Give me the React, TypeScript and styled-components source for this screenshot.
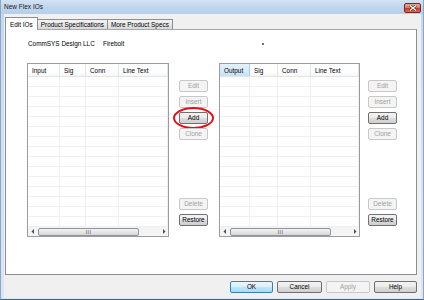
import React from "react";
import styled, { createGlobalStyle, css } from "styled-components";

const GlobalStyle = createGlobalStyle`
  html, body { margin: 0; padding: 0; background: #ffffff; }
  body { font-family: "Liberation Sans", Arial, sans-serif; }
  * { box-sizing: border-box; }
`;

const FONT = `"Liberation Sans", Arial, sans-serif`;

const Window = styled.div`
  width: 424px;
  height: 300px;
  display: flex;
  flex-direction: column;
  background: linear-gradient(180deg, #c2d7ee 0%, #cfe0f3 40%, #d8e6f5 100%);
  border-left: 1px solid #8da6c4;
  border-right: 1px solid #8da6c4;
  border-bottom: 1px solid #3e6190;
  font-family: ${FONT};
  font-size: 6.4px;
  color: #000;
`;

const TitleBar = styled.div`
  height: 14px;
  flex: none;
  display: flex;
  align-items: center;
  justify-content: space-between;
  padding: 0 2px 0 3px;
  background: linear-gradient(180deg, #d4e3f4 0%, #bfd5ee 50%, #b6cfea 100%);
`;

const Title = styled.span`
  font-size: 6.5px;
  color: #1a1a1a;
  line-height: 8px;
`;

const CloseButton = styled.div`
  width: 17px;
  height: 10px;
  margin-top: 1px;
  border: 1px solid #7a2a22;
  border-radius: 2px;
  background: linear-gradient(180deg, #e8a598 0%, #d77b6c 45%, #c2402e 55%, #d66a55 100%);
  display: flex;
  align-items: center;
  justify-content: center;
`;

const Client = styled.div`
  flex: 1;
  display: flex;
  flex-direction: column;
  margin: 0 2px 1px 3px;
  background: #f0f0f0;
  padding-top: 3px;
`;

const Tabs = styled.div`
  display: flex;
  align-items: flex-end;
  height: 12px;
  padding-left: 2px;
  position: relative;
  z-index: 1;
`;

const Tab = styled.div<{ $active?: boolean }>`
  height: 10px;
  padding: 0 3px;
  display: flex;
  align-items: center;
  border: 1px solid #8c8e94;
  border-bottom: none;
  margin-left: -1px;
  background: linear-gradient(180deg, #f3f3f3 0%, #e8e8e8 50%, #d8d8d8 100%);
  white-space: nowrap;
  ${(p) =>
    p.$active &&
    css`
      height: 13px;
      margin-bottom: -1px;
      padding: 0 4px;
      background: #ffffff;
      z-index: 2;
    `}
`;

const Panel = styled.div`
  height: 246px;
  flex: none;
  margin: 0 4px 0 1px;
  background: #ffffff;
  border: 1px solid #8c8e94;
  border-top-color: #a5a7ab;
  display: flex;
  flex-direction: column;
`;

const InfoRow = styled.div`
  margin-top: 10px;
  padding-left: 22px;
  height: 8px;
  display: grid;
  grid-template-columns: 75px 159px auto;
  align-items: center;
  line-height: 8px;
`;

const Mark = styled.span`
  width: 2px;
  height: 2px;
  background: #707070;
`;

const ListsRow = styled.div`
  margin-top: 15px;
  padding-left: 21px;
  display: flex;
  align-items: stretch;
  height: 174px;
`;

const ListBox = styled.div<{ $w: number; $gap: number }>`
  width: ${(p) => p.$w}px;
  margin-right: ${(p) => p.$gap}px;
  border: 1px solid #9a9ca0;
  background: #fff;
  display: flex;
  flex-direction: column;
  overflow: hidden;
`;

const HeaderRow = styled.div<{ $cols: string }>`
  display: grid;
  grid-template-columns: ${(p) => p.$cols};
  height: 13px;
  flex: none;
  background: linear-gradient(180deg, #ffffff 0%, #ffffff 60%, #f5f6f7 100%);
  border-bottom: 1px solid #e3e4e6;
`;

const HeaderCell = styled.div<{ $hot?: boolean }>`
  display: flex;
  align-items: center;
  padding-left: 4px;
  border-right: 1px solid #e3e4e6;
  ${(p) =>
    p.$hot &&
    css`
      background: linear-gradient(180deg, #e3f1fb 0%, #d5eaf9 60%, #c4e1f6 100%);
      border-right-color: #a9d2ef;
    `}
`;

const Rows = styled.div`
  flex: 1;
  overflow: hidden;
`;

const Row = styled.div<{ $cols: string }>`
  display: grid;
  grid-template-columns: ${(p) => p.$cols};
  height: 10px;
`;

const Cell = styled.div`
  border-right: 1px solid #f0f0f0;
  border-bottom: 1px solid #f0f0f0;
`;

const HScroll = styled.div`
  height: 10px;
  flex: none;
  display: flex;
  align-items: center;
  background: #f4f4f4;
  border-top: 1px solid #f0f0f0;
`;

const Arrow = styled.div`
  width: 9px;
  height: 9px;
  flex: none;
  display: flex;
  align-items: center;
  justify-content: center;
`;

const Track = styled.div`
  flex: 1;
  height: 8px;
  display: flex;
  align-items: center;
  padding-left: 1px;
`;

const Thumb = styled.div`
  width: 101px;
  height: 8px;
  border: 1px solid #8f9499;
  border-radius: 2px;
  background: linear-gradient(180deg, #f2f2f2 0%, #e6e6e6 50%, #d6d6d6 100%);
  display: flex;
  align-items: center;
  justify-content: center;
  font-size: 5px;
  letter-spacing: 0.5px;
  color: #404040;
  line-height: 6px;
`;

const ButtonCol = styled.div<{ $gap: number }>`
  width: 29px;
  margin-right: ${(p) => p.$gap}px;
  display: flex;
  flex-direction: column;
  gap: 4px;
  padding-top: 17px;
  padding-bottom: 11px;
`;

const Btn = styled.div<{ $disabled?: boolean; $w?: number; $default?: boolean }>`
  height: 12px;
  width: ${(p) => (p.$w ? `${p.$w}px` : "100%")};
  flex: none;
  display: flex;
  align-items: center;
  justify-content: center;
  border: 1px solid #707070;
  border-radius: 2px;
  background: linear-gradient(180deg, #f3f3f3 0%, #ebebeb 48%, #dddddd 52%, #cfcfcf 100%);
  color: #000;
  position: relative;
  line-height: 8px;
  ${(p) =>
    p.$disabled &&
    css`
      border-color: #c8c8c8;
      background: #f4f4f4;
      color: #a0a0a0;
    `}
  ${(p) =>
    p.$default &&
    css`
      border-color: #3c7fb1;
      background: linear-gradient(180deg, #eaf6fd 0%, #d9f0fc 48%, #bee6fd 52%, #a7d9f5 100%);
    `}
`;

const Spacer = styled.div`
  flex: 1;
`;

const Highlight = styled.div`
  position: absolute;
  left: -7px;
  top: -6px;
  width: 41px;
  height: 22px;
  border: 2px solid #e3101a;
  border-radius: 50%;
  pointer-events: none;
`;

const Footer = styled.div`
  display: flex;
  justify-content: flex-end;
  gap: 4px;
  padding: 6px 4px 0 0;
`;

const leftCols = "32px 26px 33px 1fr";
const rightCols = "30px 28px 33px 1fr";

const ArrowIcon = ({ dir }: { dir: "l" | "r" }) => (
  <svg width="4" height="5" viewBox="0 0 4 5">
    {dir === "l" ? <path d="M3 0 L0.5 2.5 L3 5 Z" fill="#505050" /> : <path d="M1 0 L3.5 2.5 L1 5 Z" fill="#505050" />}
  </svg>
);

const List = ({ cols, headers, w, gap, hot }: { cols: string; headers: string[]; w: number; gap: number; hot?: number }) => (
  <ListBox $w={w} $gap={gap}>
    <HeaderRow $cols={cols}>
      {headers.map((h, i) => (
        <HeaderCell key={h} $hot={hot === i}>
          {h}
        </HeaderCell>
      ))}
    </HeaderRow>
    <Rows>
      {Array.from({ length: 16 }).map((_, r) => (
        <Row key={r} $cols={cols}>
          {headers.map((h) => (
            <Cell key={h} />
          ))}
        </Row>
      ))}
    </Rows>
    <HScroll>
      <Arrow>
        <ArrowIcon dir="l" />
      </Arrow>
      <Track>
        <Thumb>III</Thumb>
      </Track>
      <Arrow>
        <ArrowIcon dir="r" />
      </Arrow>
    </HScroll>
  </ListBox>
);

const Buttons = ({ gap, mark }: { gap: number; mark?: boolean }) => (
  <ButtonCol $gap={gap}>
    <Btn $disabled>Edit</Btn>
    <Btn $disabled>Insert</Btn>
    <Btn>
      Add
      {mark && <Highlight />}
    </Btn>
    <Btn $disabled>Clone</Btn>
    <Spacer />
    <Btn $disabled>Delete</Btn>
    <Btn>Restore</Btn>
  </ButtonCol>
);

export default function App() {
  return (
    <>
      <GlobalStyle />
      <Window>
        <TitleBar>
          <Title>New Flex IOs</Title>
          <CloseButton>
            <svg width="8" height="6" viewBox="0 0 8 6">
              <path d="M1 0.5 L7 5.5 M7 0.5 L1 5.5" stroke="#5a1a14" strokeWidth="2.4" />
              <path d="M1 0.5 L7 5.5 M7 0.5 L1 5.5" stroke="#ffffff" strokeWidth="1.3" />
            </svg>
          </CloseButton>
        </TitleBar>
        <Client>
          <Tabs>
            <Tab $active>Edit IOs</Tab>
            <Tab>Product Specifications</Tab>
            <Tab>More Product Specs</Tab>
          </Tabs>
          <Panel>
            <InfoRow>
              <span>CommSYS Design LLC</span>
              <span>Firebolt</span>
              <Mark />
            </InfoRow>
            <ListsRow>
              <List cols={leftCols} headers={["Input", "Sig", "Conn", "Line Text"]} w={142} gap={10} />
              <Buttons gap={11} mark />
              <List cols={rightCols} headers={["Output", "Sig", "Conn", "Line Text"]} w={141} gap={8} hot={0} />
              <Buttons gap={0} />
            </ListsRow>
          </Panel>
          <Footer>
            <Btn $w={43} $default>OK</Btn>
            <Btn $w={45}>Cancel</Btn>
            <Btn $w={44} $disabled>Apply</Btn>
            <Btn $w={43}>Help</Btn>
          </Footer>
        </Client>
      </Window>
    </>
  );
}
